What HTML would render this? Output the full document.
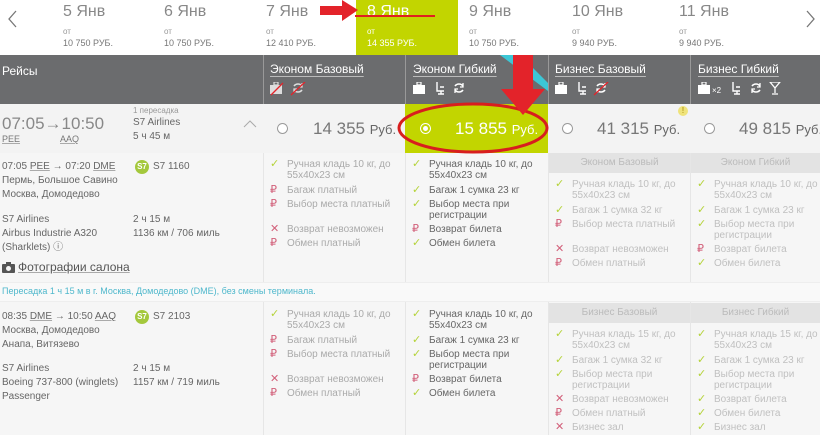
<!DOCTYPE html>
<html><head><meta charset="utf-8"><style>
*{margin:0;padding:0;box-sizing:border-box}
body{width:820px;height:435px;overflow:hidden;background:#f6f6f6;font-family:"Liberation Sans",Arial,sans-serif;position:relative;color:#777}
.a{position:absolute;white-space:nowrap}
.d{font-size:16px;color:#888}
.ot{font-size:8px;color:#999}
.dp{font-size:9px;color:#777}
.h{color:#fff;font-size:12px;text-decoration:underline;text-decoration-color:#bbb;text-underline-offset:3px}
.pr{font-size:17px;color:#777}
.pr small{font-size:13px;color:#666}
.rad{position:absolute;width:11px;height:11px;border:1px solid #999;border-radius:50%;background:#fff}
.it{position:absolute;font-size:10px;line-height:11px;color:#aaa;padding-left:19px;white-space:nowrap}
.it.dk{color:#666}
.it i{position:absolute;left:2px;top:0;font-style:normal;font-size:11px}
.ok{color:#b5d33a}.rb{color:#d2607a}.x{color:#d2607a}
.lbl{position:absolute;background:#e3e3e3;color:#bbb;font-size:10px;text-align:center;line-height:20px;height:20px}
.t{font-size:10px;color:#666;line-height:14px}
.u{text-decoration:underline;text-decoration-color:#aaa}
</style></head><body>
<svg width="0" height="0" style="position:absolute"><defs>
<g id="bag"><rect x="0" y="3" width="12" height="9" fill="currentColor"/><rect x="4" y="0" width="4" height="3" fill="none" stroke="currentColor" stroke-width="1.2"/></g>
<g id="seat"><path d="M2 0v9h7M5 5h4M6 9v3M3 12h6" fill="none" stroke="currentColor" stroke-width="1.4"/></g>
<g id="ref"><path d="M10 4A5 5 0 0 0 2 4M2 8a5 5 0 0 0 8 0" fill="none" stroke="currentColor" stroke-width="1.6"/><path d="M10 1v4H7M2 11V7h3" fill="none" stroke="currentColor" stroke-width="1.3"/></g>
<g id="gl"><path d="M0 0h10L5 6zM5 6v5M2 12h6" fill="none" stroke="currentColor" stroke-width="1.3"/></g>
</defs></svg>
<!-- top date bar -->
<div class="a" style="left:0;top:0;width:820px;height:55px;background:#fff"></div>
<div class="a" style="left:356px;top:0;width:102px;height:55px;background:#c2d500"></div>
<svg class="a" style="left:8px;top:10px" width="10" height="18"><path d="M8 1L1 9l7 8" fill="none" stroke="#777" stroke-width="1.3"/></svg>
<svg class="a" style="left:806px;top:10px" width="10" height="18"><path d="M1 1l7 8-7 8" fill="none" stroke="#777" stroke-width="1.3"/></svg>
<div class="a d" style="left:63px;top:3px">5 Янв</div><div class="a ot" style="left:63px;top:27px">от</div><div class="a dp" style="left:63px;top:38px">10 750 РУБ.</div>
<div class="a d" style="left:164px;top:3px">6 Янв</div><div class="a ot" style="left:164px;top:27px">от</div><div class="a dp" style="left:164px;top:38px">10 750 РУБ.</div>
<div class="a d" style="left:266px;top:3px">7 Янв</div><div class="a ot" style="left:266px;top:27px">от</div><div class="a dp" style="left:266px;top:38px">12 410 РУБ.</div>
<div class="a d" style="left:367px;top:3px;color:#fff">8 Янв</div><div class="a ot" style="left:367px;top:27px;color:#fff">от</div><div class="a dp" style="left:367px;top:38px;color:#fff">14 355 РУБ.</div>
<div class="a d" style="left:469px;top:3px">9 Янв</div><div class="a ot" style="left:469px;top:27px">от</div><div class="a dp" style="left:469px;top:38px">10 750 РУБ.</div>
<div class="a d" style="left:572px;top:3px">10 Янв</div><div class="a ot" style="left:572px;top:27px">от</div><div class="a dp" style="left:572px;top:38px">9 940 РУБ.</div>
<div class="a d" style="left:679px;top:3px">11 Янв</div><div class="a ot" style="left:679px;top:27px">от</div><div class="a dp" style="left:679px;top:38px">9 940 РУБ.</div>
<div class="a" style="left:355px;top:15px;width:80px;height:2px;background:#e02020"></div>
<svg class="a" style="left:320px;top:0" width="40" height="22"><path d="M0 6h22V0l16 10-16 11v-6H0z" fill="#e3232a"/></svg>
<!-- header -->
<div class="a" style="left:0;top:55px;width:820px;height:49px;background:#6b6c6e"></div>
<div class="a" style="left:263px;top:55px;width:1px;height:49px;background:#999"></div>
<div class="a" style="left:405px;top:55px;width:1px;height:49px;background:#999"></div>
<div class="a" style="left:548px;top:55px;width:1px;height:49px;background:#999"></div>
<div class="a" style="left:690px;top:55px;width:1px;height:49px;background:#999"></div>
<div class="a" style="left:2px;top:64px;color:#fff;font-size:12px">Рейсы</div>
<div class="a h" style="left:270px;top:62px">Эконом Базовый</div>
<div class="a h" style="left:413px;top:62px">Эконом Гибкий</div>
<div class="a h" style="left:555px;top:62px">Бизнес Базовый</div>
<div class="a h" style="left:698px;top:62px">Бизнес Гибкий</div>
<svg class="a" style="left:270px;top:82px;color:#ddd" width="40" height="14"><use href="#bag"/><use href="#ref" x="22"/><line x1="1" y1="13" x2="13" y2="1" stroke="#e3232a" stroke-width="1.3"/><line x1="21" y1="13" x2="35" y2="0" stroke="#e3232a" stroke-width="1.3"/></svg>
<svg class="a" style="left:413px;top:82px;color:#fff" width="60" height="14"><use href="#bag"/><use href="#seat" x="22"/><use href="#ref" x="40"/></svg>
<svg class="a" style="left:555px;top:82px;color:#fff" width="60" height="14"><use href="#bag"/><use href="#seat" x="22"/><use href="#ref" x="40"/><line x1="39" y1="13" x2="53" y2="0" stroke="#e3232a" stroke-width="1.3"/></svg>
<svg class="a" style="left:698px;top:82px;color:#fff" width="110" height="14"><use href="#bag"/><text x="14" y="11" font-size="8" fill="#fff" font-family="Liberation Sans">×2</text><use href="#seat" x="33"/><use href="#ref" x="52"/><use href="#gl" x="72"/></svg>
<svg class="a" style="left:500px;top:55px" width="48" height="36"><path d="M0 0h20l28 28v8z" fill="#3cc7d6"/></svg>
<!-- price row -->
<div class="a" style="left:0;top:104px;width:820px;height:49px;background:#f3f3f3"></div>
<div class="a" style="left:405px;top:104px;width:143px;height:49px;background:#c2d500"></div>
<div class="a" style="left:2px;top:114px;font-size:17px;color:#888">07:05→10:50</div>
<div class="a u" style="left:2px;top:134px;font-size:9px;color:#777">PEE</div>
<div class="a u" style="left:60px;top:134px;font-size:9px;color:#777">AAQ</div>
<div class="a" style="left:133px;top:106px;font-size:8px;color:#999">1 пересадка</div>
<div class="a t" style="left:133px;top:116px">S7 Airlines<br>5 ч 45 м</div>
<svg class="a" style="left:243px;top:120px" width="14" height="8"><path d="M1 7l6-6 6 6" fill="none" stroke="#aaa" stroke-width="1"/></svg>
<div class="rad" style="left:277px;top:123px"></div>
<div class="a pr" style="left:313px;top:119px">14 355 <small>Руб.</small></div>
<div class="rad" style="left:420px;top:123px;border-color:#fff;background:#c2d500"><div style="width:5px;height:5px;background:#fff;border-radius:50%;margin:2px"></div></div>
<div class="a pr" style="left:455px;top:119px;color:#fff">15 855 <small style="color:#fff">Руб.</small></div>
<svg class="a" style="left:395px;top:95px" width="160" height="65"><ellipse cx="78" cy="33" rx="74" ry="24" fill="none" stroke="#d81e1e" stroke-width="3"/></svg>
<svg class="a" style="left:500px;top:55px" width="46" height="62"><path d="M13 0h20v34h12L23 60 1 34h12z" fill="#e3232a"/></svg>
<div class="rad" style="left:562px;top:123px"></div>
<div class="a pr" style="left:597px;top:119px">41 315 <small>Руб.</small></div>
<div class="a" style="left:678px;top:106px;width:10px;height:10px;border-radius:50%;background:#efe37a;font-size:8px;color:#a08000;text-align:center;line-height:10px">!</div>
<div class="rad" style="left:704px;top:123px"></div>
<div class="a pr" style="left:739px;top:119px">49 815 <small>Руб.</small></div>
<!-- column lines -->
<div class="a" style="left:263px;top:153px;width:1px;height:130px;background:#e6e6e6"></div>
<div class="a" style="left:405px;top:153px;width:1px;height:282px;background:#e6e6e6"></div>
<div class="a" style="left:548px;top:153px;width:1px;height:282px;background:#e6e6e6"></div>
<div class="a" style="left:690px;top:153px;width:1px;height:282px;background:#e6e6e6"></div>
<div class="a" style="left:263px;top:302px;width:1px;height:133px;background:#e6e6e6"></div>
<div class="a" style="left:0;top:282px;width:820px;height:20px;background:#f9f9f9;border-top:1px solid #eee;border-bottom:1px solid #eee"></div>
<div class="a" style="left:2px;top:286px;font-size:9px;color:#4fb8cc">Пересадка 1 ч 15 м в г. Москва, Домодедово (DME), без смены терминала.</div>
<div class="lbl" style="left:549px;top:153px;width:141px">Эконом Базовый</div>
<div class="lbl" style="left:691px;top:153px;width:129px">Эконом Гибкий</div>
<div class="lbl" style="left:549px;top:303px;width:141px">Бизнес Базовый</div>
<div class="lbl" style="left:691px;top:303px;width:129px">Бизнес Гибкий</div>
<!-- left segments -->
<div class="a t" style="left:2px;top:160px">07:05 <span class="u">PEE</span> → 07:20 <span class="u">DME</span><br>Пермь, Большое Савино<br>Москва, Домодедово</div>
<div class="a" style="left:135px;top:160px;width:14px;height:14px;border-radius:50%;background:#a4c83c;color:#fff;font-size:8px;font-weight:bold;text-align:center;line-height:14px">S7</div>
<div class="a t" style="left:153px;top:160px">S7 1160</div>
<div class="a t" style="left:2px;top:213px">S7 Airlines<br>Airbus Industrie A320<br>(Sharklets) ⓘ</div>
<div class="a t" style="left:133px;top:213px">2 ч 15 м<br>1136 км / 706 миль</div>
<svg class="a" style="left:2px;top:262px" width="13" height="11"><rect x="0" y="2" width="13" height="9" rx="1" fill="#555"/><rect x="4" y="0" width="5" height="3" fill="#555"/><circle cx="6.5" cy="6.5" r="2.5" fill="#f6f6f6"/></svg>
<div class="a" style="left:18px;top:260px;font-size:12px;color:#555"><span class="u">Фотографии салона</span></div>
<div class="a t" style="left:2px;top:310px">08:35 <span class="u">DME</span> → 10:50 <span class="u">AAQ</span><br>Москва, Домодедово<br>Анапа, Витязево</div>
<div class="a" style="left:135px;top:310px;width:14px;height:14px;border-radius:50%;background:#a4c83c;color:#fff;font-size:8px;font-weight:bold;text-align:center;line-height:14px">S7</div>
<div class="a t" style="left:153px;top:310px">S7 2103</div>
<div class="a t" style="left:2px;top:362px">S7 Airlines<br>Boeing 737-800 (winglets)<br>Passenger</div>
<div class="a t" style="left:133px;top:362px">2 ч 15 м<br>1157 км / 719 миль</div>
<!-- col1 seg1 -->
<div class="it" style="left:268px;top:159px"><i class="ok">✓</i>Ручная кладь 10 кг, до<br>55x40x23 см</div>
<div class="it" style="left:268px;top:185px"><i class="rb">₽</i>Багаж платный</div>
<div class="it" style="left:268px;top:199px"><i class="rb">₽</i>Выбор места платный</div>
<div class="it" style="left:268px;top:224px"><i class="x">✕</i>Возврат невозможен</div>
<div class="it" style="left:268px;top:238px"><i class="rb">₽</i>Обмен платный</div>
<!-- col2 seg1 -->
<div class="it dk" style="left:410px;top:159px"><i class="ok">✓</i>Ручная кладь 10 кг, до<br>55x40x23 см</div>
<div class="it dk" style="left:410px;top:185px"><i class="ok">✓</i>Багаж 1 сумка 23 кг</div>
<div class="it dk" style="left:410px;top:199px"><i class="ok">✓</i>Выбор места при<br>регистрации</div>
<div class="it dk" style="left:410px;top:224px"><i class="rb">₽</i>Возврат билета</div>
<div class="it dk" style="left:410px;top:238px"><i class="ok">✓</i>Обмен билета</div>
<!-- col3 seg1 -->
<div class="it" style="left:553px;top:179px;color:#c0c0c0"><i class="ok">✓</i>Ручная кладь 10 кг, до<br>55x40x23 см</div>
<div class="it" style="left:553px;top:205px;color:#c0c0c0"><i class="ok">✓</i>Багаж 1 сумка 32 кг</div>
<div class="it" style="left:553px;top:219px;color:#c0c0c0"><i class="rb">₽</i>Выбор места платный</div>
<div class="it" style="left:553px;top:244px;color:#c0c0c0"><i class="x">✕</i>Возврат невозможен</div>
<div class="it" style="left:553px;top:258px;color:#c0c0c0"><i class="rb">₽</i>Обмен платный</div>
<!-- col4 seg1 -->
<div class="it" style="left:695px;top:179px;color:#c0c0c0"><i class="ok">✓</i>Ручная кладь 10 кг, до<br>55x40x23 см</div>
<div class="it" style="left:695px;top:205px;color:#c0c0c0"><i class="ok">✓</i>Багаж 1 сумка 23 кг</div>
<div class="it" style="left:695px;top:219px;color:#c0c0c0"><i class="ok">✓</i>Выбор места при<br>регистрации</div>
<div class="it" style="left:695px;top:244px;color:#c0c0c0"><i class="rb">₽</i>Возврат билета</div>
<div class="it" style="left:695px;top:258px;color:#c0c0c0"><i class="ok">✓</i>Обмен билета</div>
<!-- col1 seg2 -->
<div class="it" style="left:268px;top:309px"><i class="ok">✓</i>Ручная кладь 10 кг, до<br>55x40x23 см</div>
<div class="it" style="left:268px;top:335px"><i class="rb">₽</i>Багаж платный</div>
<div class="it" style="left:268px;top:349px"><i class="rb">₽</i>Выбор места платный</div>
<div class="it" style="left:268px;top:374px"><i class="x">✕</i>Возврат невозможен</div>
<div class="it" style="left:268px;top:388px"><i class="rb">₽</i>Обмен платный</div>
<!-- col2 seg2 -->
<div class="it dk" style="left:410px;top:309px"><i class="ok">✓</i>Ручная кладь 10 кг, до<br>55x40x23 см</div>
<div class="it dk" style="left:410px;top:335px"><i class="ok">✓</i>Багаж 1 сумка 23 кг</div>
<div class="it dk" style="left:410px;top:349px"><i class="ok">✓</i>Выбор места при<br>регистрации</div>
<div class="it dk" style="left:410px;top:374px"><i class="rb">₽</i>Возврат билета</div>
<div class="it dk" style="left:410px;top:388px"><i class="ok">✓</i>Обмен билета</div>
<!-- col3 seg2 -->
<div class="it" style="left:553px;top:329px;color:#c0c0c0"><i class="ok">✓</i>Ручная кладь 15 кг, до<br>55x40x23 см</div>
<div class="it" style="left:553px;top:355px;color:#c0c0c0"><i class="ok">✓</i>Багаж 1 сумка 32 кг</div>
<div class="it" style="left:553px;top:369px;color:#c0c0c0"><i class="ok">✓</i>Выбор места при<br>регистрации</div>
<div class="it" style="left:553px;top:394px;color:#c0c0c0"><i class="x">✕</i>Возврат невозможен</div>
<div class="it" style="left:553px;top:408px;color:#c0c0c0"><i class="rb">₽</i>Обмен платный</div>
<div class="it" style="left:553px;top:422px;color:#c0c0c0"><i class="x">✕</i>Бизнес зал</div>
<!-- col4 seg2 -->
<div class="it" style="left:695px;top:329px;color:#c0c0c0"><i class="ok">✓</i>Ручная кладь 15 кг, до<br>55x40x23 см</div>
<div class="it" style="left:695px;top:355px;color:#c0c0c0"><i class="ok">✓</i>Багаж 1 сумка 23 кг</div>
<div class="it" style="left:695px;top:369px;color:#c0c0c0"><i class="ok">✓</i>Выбор места при<br>регистрации</div>
<div class="it" style="left:695px;top:394px;color:#c0c0c0"><i class="ok">✓</i>Возврат билета</div>
<div class="it" style="left:695px;top:408px;color:#c0c0c0"><i class="ok">✓</i>Обмен билета</div>
<div class="it" style="left:695px;top:422px;color:#c0c0c0"><i class="ok">✓</i>Бизнес зал</div>
</body></html>
